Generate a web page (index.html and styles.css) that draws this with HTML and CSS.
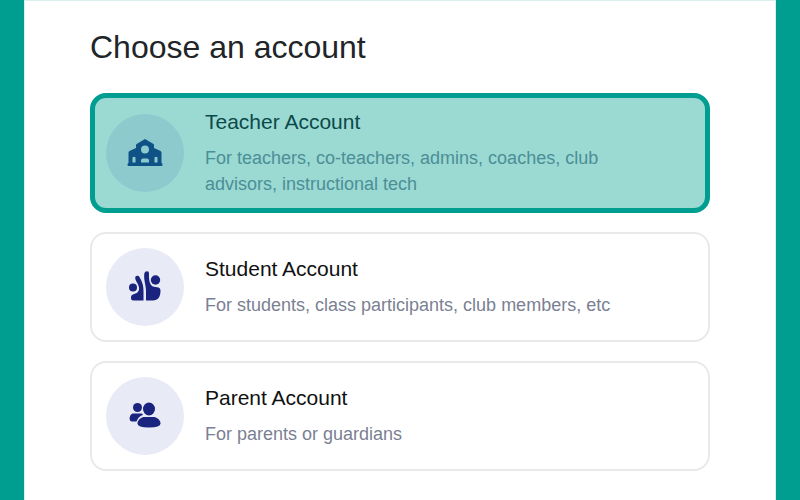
FILE: index.html
```html
<!DOCTYPE html>
<html lang="en">
<head>
    <meta charset="UTF-8">
    <meta name="viewport" content="width=device-width, initial-scale=1.0">
    <title>Choose an account</title>
    <link rel="stylesheet" href="styles.css">
</head>
<body>
    <main class="panel">
        <h1>Choose an account</h1>

        <div class="accounts">
            <button type="button" class="account selected">
                <span class="icon">
                    <svg viewBox="0 0 36 28" width="36" height="28" aria-hidden="true">
                        <path fill-rule="evenodd" d="M18 0 26.500 5Q27 5.400 27 6V9L33.500 12Q34.500 12.500 34.500 13.500V24H34.500Q35.500 24 35.500 25.500T34.500 27H1.500Q.5 27 .5 25.500T1.500 24H1.500V13.500Q1.500 12.500 2.500 12L9 9V6Q9 5.300 9.700 4.900ZM18 6.500A4 4 0 1 0 18 14.500A4 4 0 1 0 18 6.500ZM5.500 18.500V23.500H8.500V18.500Q7 17 5.500 18.500ZM27.500 18.500V23.500H30.500V18.500Q29 17 27.500 18.500ZM14 23.500H22V21.500Q22 19.500 20 19.500H16Q14 19.500 14 21.500Z"/>
                    </svg>
                </span>
                <span class="text">
                    <span class="title">Teacher Account</span>
                    <span class="desc">For teachers, co-teachers, admins, coaches, club advisors, instructional tech</span>
                </span>
            </button>

            <button type="button" class="account">
                <span class="icon">
                    <svg viewBox="0 0 32 32" width="32" height="32" aria-hidden="true">
                        <circle cx="4" cy="16.500" r="4"/>
                        <circle cx="26.500" cy="9" r="4.700"/>
                        <path d="M6.200 7C6.200 4.500 9.200 4 10.600 6.200C13.500 11 14.500 15 14.500 20V29.500H4.500Q2 29.500 2 27V26Q2 24 4.500 23.300C8.500 22.300 10.500 20 10 16.500C9.500 13 6.200 9.500 6.200 7Z"/>
                        <path d="M15.300 2.500Q15.800 .3 18 .3T20 2.500C19.700 8 20.500 15 25 15.800L29.500 16.500Q31.500 17 31.500 19.500C31.500 26 29 29.500 24 29.500H17V20C17 14 14.500 9 15.300 2.500Z"/>
                    </svg>
                </span>
                <span class="text">
                    <span class="title">Student Account</span>
                    <span class="desc">For students, class participants, club members, etc</span>
                </span>
            </button>

            <button type="button" class="account">
                <span class="icon">
                    <svg viewBox="0 0 32 28" width="32" height="28" aria-hidden="true">
                        <circle cx="8.500" cy="5.500" r="4.500"/>
                        <ellipse cx="20" cy="7" rx="6" ry="6.500"/>
                        <path d="M3.500 11.500H12Q13.500 11.500 14 12.800C10.500 14.500 8.500 16.500 7.500 19.500H3Q.5 19 .5 16.500Q1 12.500 3.500 11.500Z"/>
                        <path d="M14.500 15H25.500C29 16 31.500 18.500 31.500 21.500Q31.500 25.500 20 25.500T8.500 21.500C8.500 18.500 11 16 14.500 15Z"/>
                    </svg>
                </span>
                <span class="text">
                    <span class="title">Parent Account</span>
                    <span class="desc">For parents or guardians</span>
                </span>
            </button>
        </div>
    </main>
</body>
</html>
```
FILE: styles.css
```css
* {
    box-sizing: border-box;
}
body {
    margin: 0;
    padding: 0 24px;
    background-color: #009d91;
    font-family: "Liberation Sans", Arial, sans-serif;
}
.panel {
    min-height: 100vh;
    padding: 24px 65px 29px;
    background-color: white;
    border: 1px solid #d9f0ee;
    border-bottom: 0;
}
h1 {
    margin: 0 0 24px;
    color: #212529;
    font-size: 32px;
    font-weight: 400;
    line-height: 44px;
}
.accounts {
    display: flex;
    flex-direction: column;
    gap: 19px;
}
.account {
    display: flex;
    align-items: center;
    gap: 21px;
    width: 100%;
    padding: 14px;
    border: 2px solid #e9e9ec;
    border-radius: 16px;
    background-color: white;
    font-family: inherit;
    text-align: left;
    cursor: pointer;
}
.icon {
    display: flex;
    flex-shrink: 0;
    align-items: center;
    justify-content: center;
    width: 78px;
    height: 78px;
    border-radius: 50%;
    background-color: #e8eaf6;
    fill: #1a237e;
}
.text {
    display: flex;
    flex-direction: column;
    gap: 10px;
    padding-right: 60px;
    line-height: 26px;
}
.title {
    color: #111;
    font-size: 21px;
}
.desc {
    color: #7b7f93;
    font-size: 18px;
}
.selected {
    padding: 11px;
    border: 5px solid #009d91;
    background-color: #9bd9d3;
}
.selected .icon {
    background-color: #8dcace;
    fill: #0f5286;
}
.selected .title {
    color: #0b4a49;
}
.selected .desc {
    color: #4b8f96;
}
```
